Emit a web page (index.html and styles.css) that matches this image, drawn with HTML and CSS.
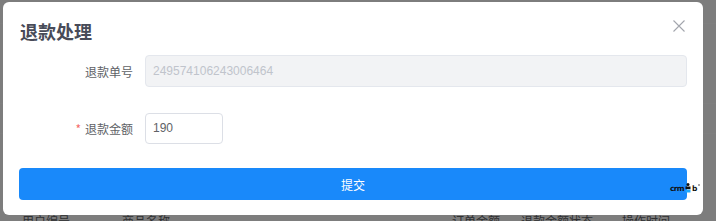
FILE: index.html
```html
<!DOCTYPE html>
<html lang="zh-CN">
<head>
<meta charset="utf-8">
<title>退款处理</title>
<link rel="stylesheet" href="styles.css">
</head>
<body>
<div class="page">
  <div class="page-line line-a"></div>
  <div class="page-line line-b"></div>
  <div class="page-line line-c"></div>
  <div class="table-row">
    <span class="cell cell-1">用户编号</span>
    <span class="cell cell-2">商品名称</span>
    <span class="cell cell-3">订单金额</span>
    <span class="cell cell-4">退款金额状态</span>
    <span class="cell cell-5">操作时间</span>
  </div>
</div>
<div class="overlay">
  <div class="modal">
    <div class="modal-header">
      <h2 class="modal-title">退款处理</h2>
      <button class="modal-close" type="button" aria-label="关闭">
        <svg width="12" height="12" viewBox="0 0 12 12"><path d="M0.5 0.5 L11.5 11.5 M11.5 0.5 L0.5 11.5" stroke="#a3a6ad" stroke-width="1.1" fill="none"/></svg>
      </button>
    </div>
    <form class="form">
      <div class="form-item">
        <label class="form-label">退款单号</label>
        <input class="input input-disabled" value="249574106243006464" disabled>
      </div>
      <div class="form-item">
        <label class="form-label"><span class="required">*</span>退款金额</label>
        <input class="input input-short" value="190">
      </div>
    </form>
    <button class="submit" type="button">提交</button>
    <div class="badge"><span class="badge-text">crm</span><svg width="6" height="10" viewBox="0 0 6 10"><circle cx="3" cy="1.6" r="1.5" fill="#111"/><path d="M0.5 3.5 H5.5 V6.2 H0.5 Z" fill="#111"/><path d="M0.5 6.6 H5.5 V9.5 H0.5 Z" fill="#1ea7fd"/></svg><span class="badge-text">b</span><i class="badge-dot"></i></div>
  </div>
</div>
</body>
</html>
```
FILE: styles.css
```css
* { box-sizing: border-box; }
html, body { margin: 0; padding: 0; }
body {
  width: 716px;
  height: 221px;
  overflow: hidden;
  background: #ffffff;
  font-family: "Noto Sans CJK SC", "Liberation Sans", sans-serif;
}
.page {
  position: relative;
  height: 221px;
  overflow: hidden;
  background: #fafafa;
}
.page-line {
  height: 1px;
  background: #ffffff;
}
.line-a { margin-top: 23px; }
.line-b { margin-top: 79px; }
.line-c { margin-top: 29px; }
.table-row {
  display: grid;
  grid-template-columns: 100px 330px 69px 101px 90px;
  padding-left: 22px;
  padding-top: 79px;
  font-size: 12px;
  line-height: 16px;
  color: #606266;
}
.overlay {
  position: fixed;
  inset: 0;
  background: rgba(0, 0, 0, 0.5);
  padding: 2px 13px 0 3px;
}
.modal {
  position: relative;
  width: 700px;
  height: 213px;
  background: #ffffff;
  border-radius: 6px;
  padding: 16px 16px 15px 16px;
}
.modal-header {
  display: flex;
  justify-content: space-between;
  align-items: flex-start;
  height: 26px;
}
.modal-title {
  margin: 0;
  padding-left: 1px;
  font-size: 18px;
  line-height: 26px;
  font-weight: 700;
  color: #484b58;
}
.modal-close {
  border: 0;
  padding: 0;
  background: none;
  margin-top: 2px;
  margin-right: 2px;
  width: 12px;
  height: 12px;
  display: flex;
}
.form {
  margin-top: 11px;
  display: flex;
  flex-direction: column;
  gap: 25px;
}
.form-item {
  display: flex;
  align-items: center;
  height: 32px;
}
.form-label {
  width: 126px;
  padding-right: 12px;
  text-align: right;
  font-size: 12px;
  color: #606266;
}
.required {
  color: #f56c6c;
  margin-right: 4px;
}
.input {
  height: 32px;
  border: 1px solid #dcdfe6;
  border-radius: 4px;
  padding: 0 7px;
  font-family: "Liberation Sans", Arial, sans-serif;
  font-size: 12px;
  color: #606266;
  background: #ffffff;
  outline: none;
}
.input-disabled {
  flex: 1;
  background: #f2f3f5;
  border-color: #e4e7ed;
  color: #c0c4cc;
}
.input-short {
  width: 78px;
  height: 31px;
}
.submit {
  display: block;
  width: 100%;
  height: 32px;
  margin-top: 24px;
  border: 0;
  border-radius: 4px;
  background: #1989fa;
  color: #ffffff;
  font-family: "Noto Sans CJK SC", sans-serif;
  font-size: 12px;
}
.badge {
  position: absolute;
  left: 667px;
  top: 181px;
  display: flex;
  align-items: flex-end;
  height: 10px;
  color: #111;
}
.badge-text {
  font-family: "DejaVu Sans", sans-serif;
  font-weight: 700;
  font-size: 7.5px;
  line-height: 8px;
  letter-spacing: -0.7px;
}
.badge svg { margin: 0 1px 0 1px; }
.badge-dot {
  position: absolute;
  right: -3px;
  top: 1px;
  width: 2px;
  height: 2px;
  background: #aaa;
}
```
